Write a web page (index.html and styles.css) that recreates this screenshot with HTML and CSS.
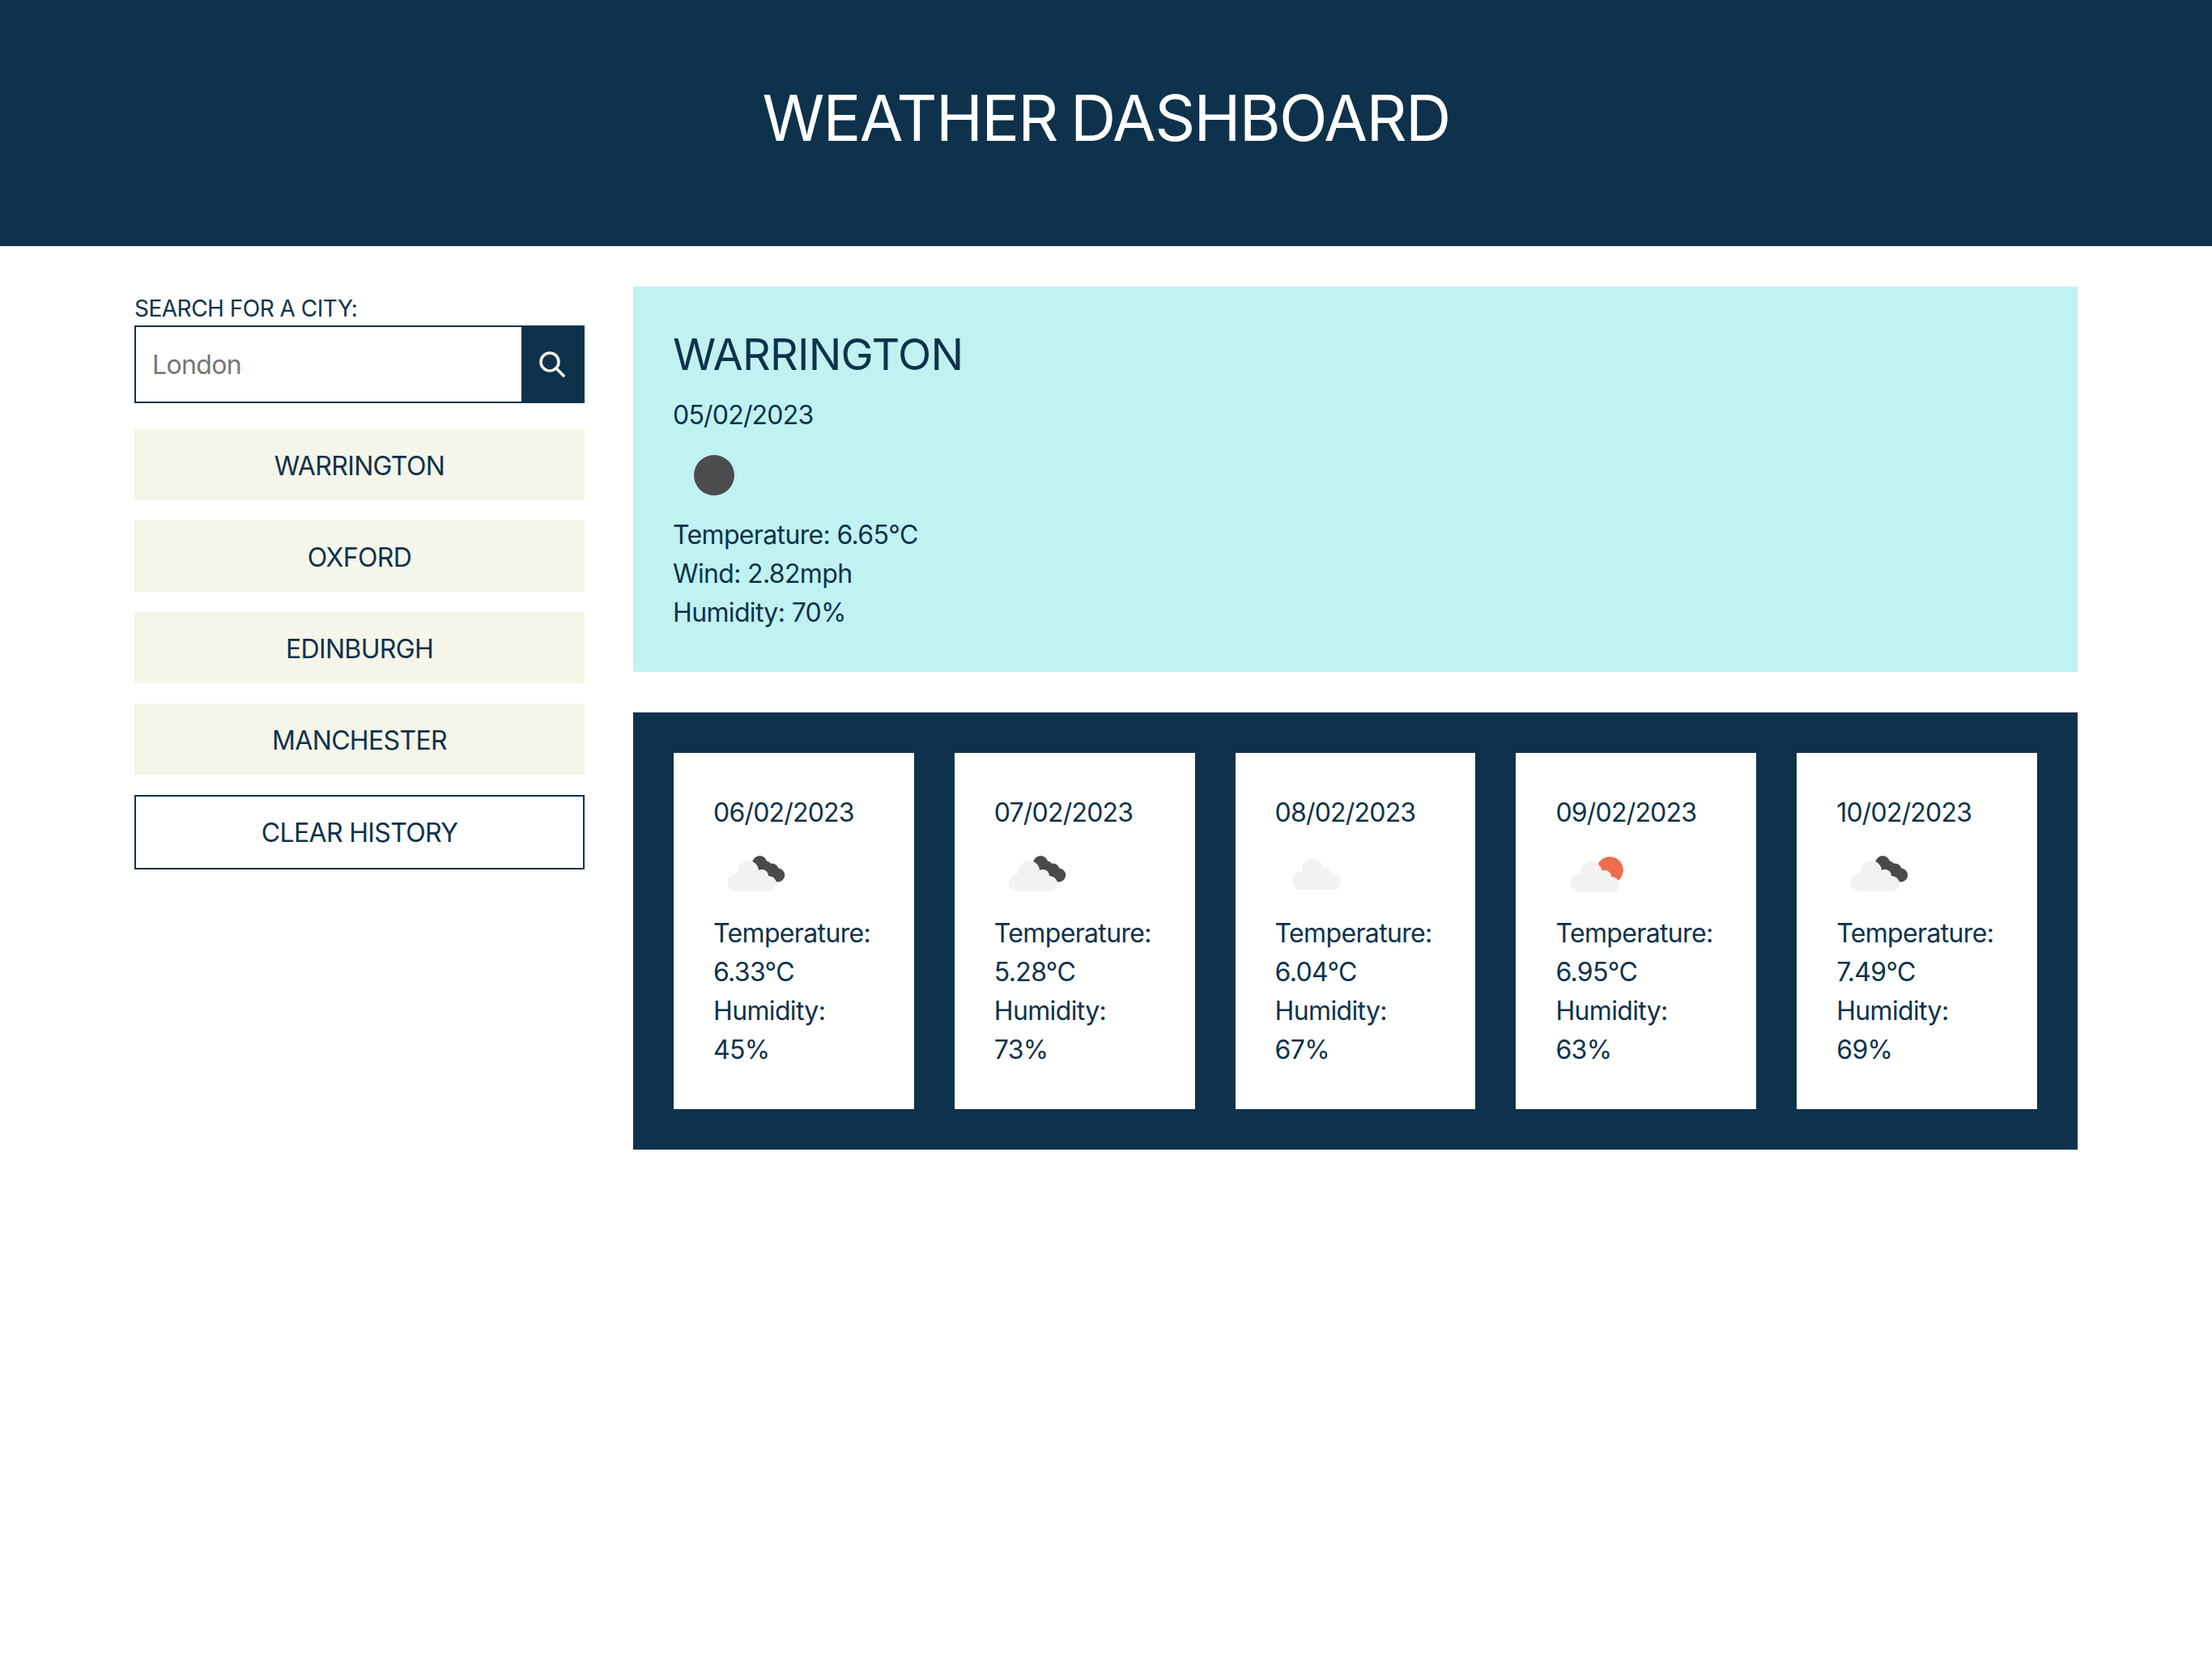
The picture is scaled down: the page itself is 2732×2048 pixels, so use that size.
FILE: index.html
```html
<!DOCTYPE html>
<html lang="en">
<head>
<meta charset="utf-8">
<title>Weather Dashboard</title>
<link rel="stylesheet" href="styles.css">
</head>
<body>
<header class="top"><h1 class="title">WEATHER DASHBOARD</h1></header>
<main class="layout">
  <aside class="side">
    <label class="label">SEARCH FOR A CITY:</label>
    <div class="search">
      <div class="field">London</div>
      <div class="go"><svg width="32" height="32" viewBox="0 0 32 32" fill="none" stroke="#f5f5e9" stroke-width="3.6" stroke-linecap="round"><circle cx="13" cy="13" r="11"/><path d="M21 21l9 9"/></svg></div>
    </div>
    <div class="hist">WARRINGTON</div>
    <div class="hist">OXFORD</div>
    <div class="hist">EDINBURGH</div>
    <div class="hist">MANCHESTER</div>
    <div class="clear">CLEAR HISTORY</div>
  </aside>
  <section class="content">
    <div class="today">
      <h2 class="city">WARRINGTON</h2>
      <p class="date">05/02/2023</p>
      <div class="wicon"><svg class="soft" width="100" height="100" viewBox="0 0 100 100"><circle cx="50" cy="50" r="25" fill="#4c4b4d"/></svg></div>
      <p class="line">Temperature: 6.65°C</p>
      <p class="line">Wind: 2.82mph</p>
      <p class="line">Humidity: 70%</p>
    </div>
    <div class="forecast">
      <div class="card"><p class="date">06/02/2023</p><div class="wicon"><svg class="soft" width="100" height="100" viewBox="0 0 100 100"><use href="#d"/><use href="#c" x="17" y="35"/></svg></div><p class="line">Temperature: 6.33°C</p><p class="line">Humidity: 45%</p></div>
      <div class="card"><p class="date">07/02/2023</p><div class="wicon"><svg class="soft" width="100" height="100" viewBox="0 0 100 100"><use href="#d"/><use href="#c" x="17" y="35"/></svg></div><p class="line">Temperature: 5.28°C</p><p class="line">Humidity: 73%</p></div>
      <div class="card"><p class="date">08/02/2023</p><div class="wicon"><svg class="soft" width="100" height="100" viewBox="0 0 100 100"><use href="#c" x="20" y="33"/></svg></div><p class="line">Temperature: 6.04°C</p><p class="line">Humidity: 67%</p></div>
      <div class="card"><p class="date">09/02/2023</p><div class="wicon"><svg class="soft" width="100" height="100" viewBox="0 0 100 100"><circle cx="66.3" cy="46.7" r="16.5" fill="#ee6e4b"/><circle cx="44.7" cy="51.3" r="12.7" fill="#fff"/><circle cx="63" cy="59.7" r="6.7" fill="#fff"/><circle cx="69.7" cy="64.7" r="6" fill="#fff"/><use href="#c" x="18" y="36"/></svg></div><p class="line">Temperature: 6.95°C</p><p class="line">Humidity: 63%</p></div>
      <div class="card"><p class="date">10/02/2023</p><div class="wicon"><svg class="soft" width="100" height="100" viewBox="0 0 100 100"><use href="#d"/><use href="#c" x="17" y="35"/></svg></div><p class="line">Temperature: 7.49°C</p><p class="line">Humidity: 69%</p></div>
    </div>
  </section>
</main>
<svg class="defs" width="0" height="0"><defs>
<g id="c" fill="#f2f2f2"><circle cx="25" cy="13" r="13"/><circle cx="42" cy="19" r="8"/><circle cx="11" cy="27" r="11"/><circle cx="50.5" cy="28.5" r="9.5"/><rect x="11" y="20" width="39" height="18"/></g>
<g id="d" fill="#4a4a4c"><circle cx="56.3" cy="38" r="9"/><circle cx="64" cy="42.5" r="7"/><circle cx="71.3" cy="47" r="8.5"/><circle cx="78.7" cy="53" r="8.5"/></g>
</defs></svg>
</body>
</html>
```
FILE: styles.css
```css
* { box-sizing: border-box; }
html, body { margin: 0; background: #fff; }
body { font-family: Inter, "Liberation Sans", sans-serif; color: #0e324b; font-size: 32px; letter-spacing: -0.65px; }
p, h1, h2 { margin: 0; font-weight: 400; }
.top { height: 304px; background: #0e324b; display: flex; justify-content: center; padding-top: 106px; }
.title { color: #fff; font-size: 78px; line-height: 80px; letter-spacing: -1.7px; word-spacing: -4px; }
.layout { display: flex; gap: 60px; padding: 50px 166px 0; }
.side { width: 556px; flex: none; display: flex; flex-direction: column; }
.label { font-size: 28px; line-height: 50px; letter-spacing: -0.5px; padding-top: 2px; margin-bottom: -2px; height: 50px; }
.search { display: flex; height: 96px; border: 2px solid #0e324b; margin-bottom: 32px; }
.field { flex: 1; display: flex; align-items: center; padding-left: 20px; color: #757575; }
.go { width: 78px; background: #0e324b; display: flex; align-items: center; justify-content: center; margin-right: -2px; padding-right: 2px; }
.hist { height: 88px; background: #f5f5e9; margin-bottom: 25px; display: flex; align-items: center; justify-content: center; padding-top: 2px; }
.clear { height: 92px; border: 2px solid #0e324b; display: flex; align-items: center; justify-content: center; }
.content { flex: 1; display: flex; flex-direction: column; gap: 50px; }
.today { background: #bff2f1; padding: 50px 50px 0 49px; height: 476px; }
.city { font-size: 54px; line-height: 67px; margin-bottom: 18px; letter-spacing: -0.75px; }
.date { line-height: 48px; letter-spacing: -0.8px; }
.line { line-height: 48px; }
.wicon { height: 100px; margin-left: 1px; }
.card .wicon { margin-bottom: 1px; }
.soft { filter: blur(0.6px); display: block; }
.forecast { background: #0e324b; padding: 50px; display: flex; gap: 50px; }
.card { flex: 1 1 0; min-width: 0; height: 440px; background: #fff; padding: 50px 40px 0 49px; }
.defs { position: absolute; }
```
